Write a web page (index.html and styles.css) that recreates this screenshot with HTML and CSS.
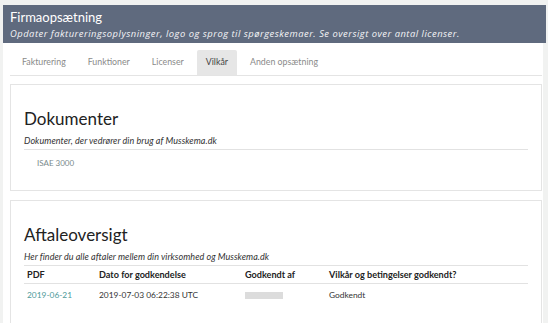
FILE: index.html
```html
<!DOCTYPE html>
<html>
<head>
<meta charset="utf-8">
<link rel="stylesheet" href="styles.css">
</head>
<body>
<div class="page">
  <header class="head">
    <div class="head-title">Firmaopsætning</div>
    <div class="head-sub">Opdater faktureringsoplysninger, logo og sprog til spørgeskemaer. Se oversigt over antal licenser.</div>
  </header>
  <main class="content">
    <nav class="tabs">
      <span class="tab">Fakturering</span>
      <span class="tab">Funktioner</span>
      <span class="tab">Licenser</span>
      <span class="tab active">Vilkår</span>
      <span class="tab">Anden opsætning</span>
    </nav>
    <section class="card card-docs">
      <h2 class="card-title">Dokumenter</h2>
      <p class="card-sub">Dokumenter, der vedrører din brug af Musskema.dk</p>
      <div class="doc-list">
        <span class="doc">ISAE 3000</span>
      </div>
    </section>
    <section class="card card-agree">
      <h2 class="card-title">Aftaleoversigt</h2>
      <p class="card-sub">Her finder du alle aftaler mellem din virksomhed og Musskema.dk</p>
      <table class="tbl">
        <thead>
          <tr><th class="c1">PDF</th><th class="c2">Dato for godkendelse</th><th class="c3">Godkendt af</th><th class="c4">Vilkår og betingelser godkendt?</th></tr>
        </thead>
        <tbody>
          <tr><td class="link">2019-06-21</td><td>2019-07-03 06:22:38 UTC</td><td><span class="blur"></span></td><td>Godkendt</td></tr>
        </tbody>
      </table>
    </section>
  </main>
</div>
</body>
</html>
```

FILE: styles.css
```css
html, body {
  margin: 0;
  padding: 0;
}
body {
  background: #f1f2f1;
  font-family: "Lato", "Open Sans", sans-serif;
  color: #333;
  width: 548px;
  height: 323px;
  overflow: hidden;
}
.page {
  padding-top: 5px;
  padding-left: 3px;
}
.head {
  width: 543px;
  height: 38px;
  background: #5f6a7e;
  color: #fff;
  box-sizing: border-box;
  padding: 4px 0 0 7px;
}
.head-title {
  font-size: 13px;
  line-height: 17px;
}
.head-sub {
  font-family: "Open Sans", sans-serif;
  font-size: 9.4px;
  letter-spacing: 0.5px;
  font-style: italic;
  line-height: 12px;
  margin-top: 2px;
  color: #f4f4f6;
  white-space: nowrap;
}
.content {
  width: 540px;
  background: #fff;
  box-sizing: border-box;
  padding: 7px 1px 0 7px;
  height: 285px;
}
.tabs {
  display: flex;
  align-items: flex-end;
  gap: 4px;
  border-bottom: 1px solid #e4e4e4;
  height: 25px;
  padding-left: 3px;
}
.tab {
  font-size: 8.8px;
  color: #8a8a8a;
  padding: 0 9px;
  height: 25px;
  line-height: 23px;
  border-radius: 2px 2px 0 0;
}
.active {
  background: #e6e6e6;
  color: #444;
}
.card {
  border: 1px solid #e4e4e4;
  margin-top: 8px;
  padding: 0 13px 0 13px;
  box-sizing: border-box;
}
.card-docs {
  height: 107px;
}
.card-agree {
  margin-top: 9px;
  height: 130px;
}
.card-title {
  margin: 0;
  font-weight: 400;
  font-size: 17px;
  color: #222;
  padding-top: 24px;
  line-height: 20px;
}
.card-sub {
  margin: 6px 0 0;
  font-size: 9px;
  letter-spacing: 0.05px;
  font-style: italic;
  color: #333;
  line-height: 12px;
  padding-bottom: 2px;
  border-bottom: 1px solid #e2e2e2;
}
.doc-list {
  padding: 3px 0 0 13px;
  line-height: 14px;
}
.doc {
  font-size: 8px;
  color: #7a8a8c;
}
.tbl {
  width: 100%;
  border-collapse: collapse;
  font-size: 8.4px;
}
.tbl th {
  text-align: left;
  font-weight: 700;
  font-size: 9.1px;
  color: #222;
  padding: 4px 3px 3px;
  border-bottom: 1px solid #e2e2e2;
  line-height: 10px;
}
.tbl td {
  padding: 6px 3px;
  color: #333;
  line-height: 10px;
}
.c1 { width: 66px; }
.c2 { width: 140px; }
.c3 { width: 78px; }
.tbl .link {
  color: #4e9a9a;
}
.blur {
  display: inline-block;
  width: 38px;
  height: 7px;
  background: #dcdcdc;
  vertical-align: middle;
}
```
